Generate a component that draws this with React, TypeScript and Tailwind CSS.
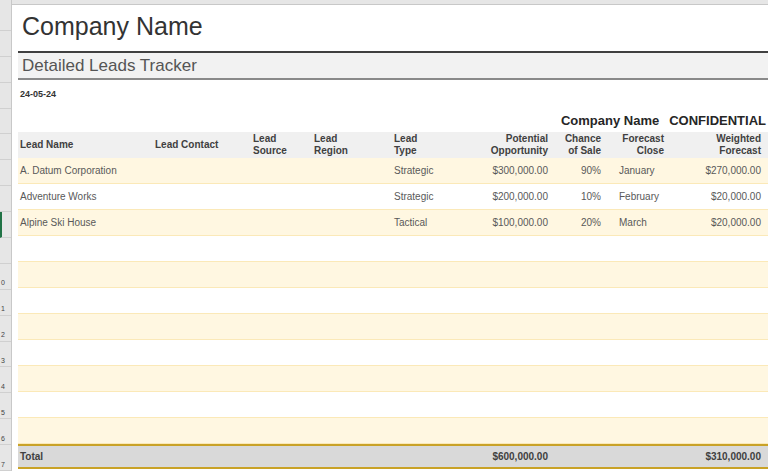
import React from "react";

const cols = "grid grid-cols-[135px_100px_61px_80px_84px_70px_53px_67px_95px]";

const data = [
  ["A. Datum Corporation", "Strategic", "$300,000.00", "90%", "January", "$270,000.00"],
  ["Adventure Works", "Strategic", "$200,000.00", "10%", "February", "$20,000.00"],
  ["Alpine Ski House", "Tactical", "$100,000.00", "20%", "March", "$20,000.00"],
];

export default function App() {
  const rows = Array.from({ length: 11 }, (_, i) => data[i] || null);
  const rowNums = ["", "", "", "", "", "", "", "", "", "", "", "", "", "0", "1", "2", "3", "4", "5", "6", "7"];
  return (
    <div className="w-[768px] h-[471px] overflow-hidden bg-white flex text-[#404040]" style={{ fontFamily: '"Liberation Sans", Arial, sans-serif' }}>
      <div className="w-[12px] shrink-0 bg-[#e6e6e6] border-r border-[#c8c8c8] flex flex-col pt-[5px]">
        {[...Array(18)].map((_, i) => (
          <div key={i} className={`h-[26px] border-b border-[#d0d0d0] text-[7px] text-[#444] flex items-end pl-[1px] ${i === 8 ? "border-l-2 border-l-[#217346]" : ""}`}>
            {rowNums[i + 3]}
          </div>
        ))}
      </div>
      <div className="flex-1 flex flex-col">
        <div className="h-[5px] bg-[#e6e6e6] border-b border-[#c8c8c8]" />
        <div className="pl-[6px] flex-1 flex flex-col">
          <div className="h-[46px] flex items-end pl-[4px] pb-[6px] text-[25px] text-[#333]">Company Name</div>
          <div className="border-t-2 border-[#404040] border-b-2 border-b-[#8a8a8a] bg-[#f2f2f2] h-[29px] flex items-center pl-[4px] text-[17px] text-[#555]">Detailed Leads Tracker</div>
          <div className="h-[30px] flex items-center pl-[2px] text-[9px] font-bold text-[#333]">24-05-24</div>
          <div className="h-[22px] flex items-center justify-end gap-[10px] pr-[2px] text-[13px] font-bold text-[#262626]">
            <span>Company Name</span><span>CONFIDENTIAL</span>
          </div>
          <div className={`${cols} h-[26px] bg-[#f0f0f0] text-[10px] font-bold text-[#404040] leading-[12px] items-center`}>
            <div className="pl-[2px]">Lead Name</div>
            <div className="pl-[2px]">Lead Contact</div>
            <div>Lead<br />Source</div>
            <div>Lead<br />Region</div>
            <div>Lead<br />Type</div>
            <div className="text-right">Potential<br />Opportunity</div>
            <div className="text-right">Chance<br />of Sale</div>
            <div className="text-right pr-[4px]">Forecast<br />Close</div>
            <div className="text-right pr-[2px]">Weighted<br />Forecast</div>
          </div>
          {rows.map((r, i) => (
            <div key={i} className={`${cols} h-[26px] items-center text-[10px] text-[#595959] border-b border-[#fbe9b8] ${i % 2 === 0 ? "bg-[#fff7e1]" : "bg-white"}`}>
              <div className="pl-[2px]">{r?.[0]}</div>
              <div />
              <div />
              <div />
              <div>{r?.[1]}</div>
              <div className="text-right">{r?.[2]}</div>
              <div className="text-right">{r?.[3]}</div>
              <div className="pl-[18px]">{r?.[4]}</div>
              <div className="text-right pr-[2px]">{r?.[5]}</div>
            </div>
          ))}
          <div className={`${cols} h-[25px] items-center bg-[#d9d9d9] border-t-2 border-b-2 border-[#c9a227] text-[10px] font-bold text-[#404040]`}>
            <div className="pl-[2px]">Total</div>
            <div /><div /><div /><div />
            <div className="text-right">$600,000.00</div>
            <div /><div />
            <div className="text-right pr-[2px]">$310,000.00</div>
          </div>
        </div>
      </div>
    </div>
  );
}
